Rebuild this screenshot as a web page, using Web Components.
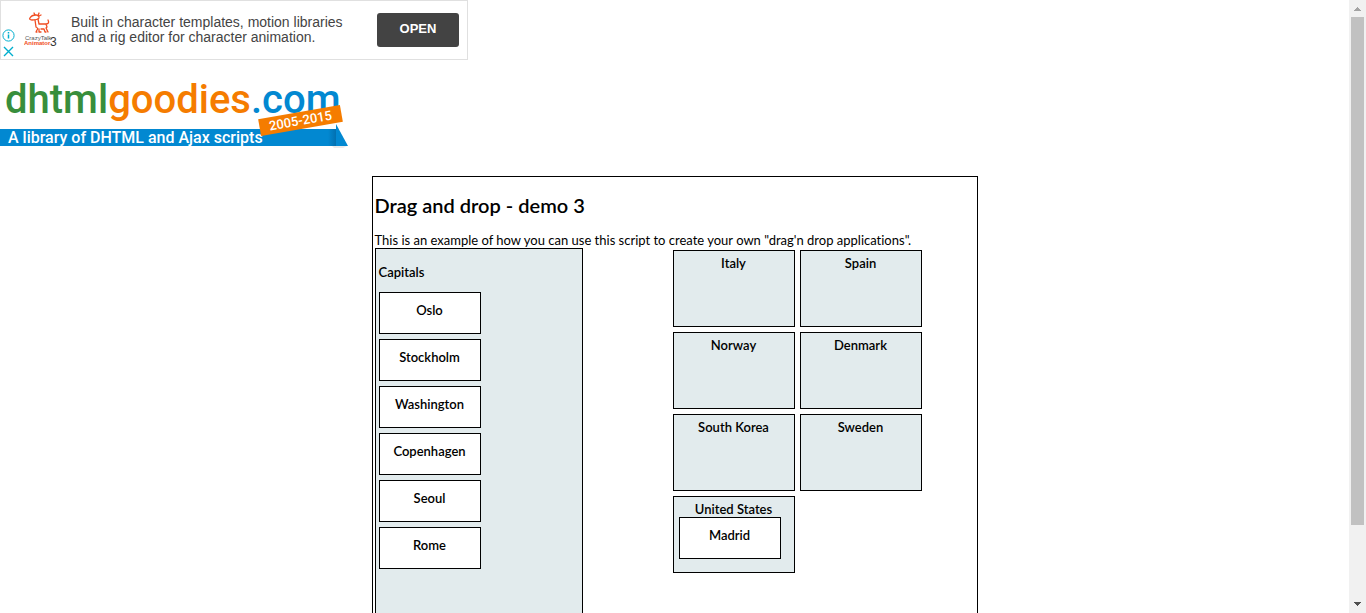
<!DOCTYPE html>
<html lang="en">
<head>
<meta charset="utf-8">
<title>Drag and drop - demo 3</title>
<style>
  body { margin: 0; background: #fff; color: #000; font-family: "Trebuchet MS", Lato, sans-serif; font-size: 13px; line-height: 16px; font-variant-ligatures: none; }
</style>
</head>
<body>
<page-shell>
  <ad-banner></ad-banner>
  <site-logo></site-logo>
  <demo-panel heading="Drag and drop - demo 3">
    <span slot="intro">This is an example of how you can use this script to create your own "drag'n drop applications".</span>
    <capital-list slot="source" heading="Capitals">
      <drag-card>Oslo</drag-card>
      <drag-card>Stockholm</drag-card>
      <drag-card>Washington</drag-card>
      <drag-card>Copenhagen</drag-card>
      <drag-card>Seoul</drag-card>
      <drag-card>Rome</drag-card>
    </capital-list>
    <country-grid slot="targets">
      <country-box name="Italy"></country-box>
      <country-box name="Spain"></country-box>
      <country-box name="Norway"></country-box>
      <country-box name="Denmark"></country-box>
      <country-box name="South Korea"></country-box>
      <country-box name="Sweden"></country-box>
      <country-box name="United States"><drag-card>Madrid</drag-card></country-box>
    </country-grid>
  </demo-panel>
</page-shell>
<script>
const define = (tag, html, setup) => customElements.define(tag, class extends HTMLElement {
  constructor() {
    super();
    this.attachShadow({ mode: "open" }).innerHTML = html;
  }
  connectedCallback() { if (setup) setup(this, this.shadowRoot); }
});

define("scroll-rail", `
  <style>
    :host { display: flex; flex-direction: column; align-items: center; background: #f1f1f1; }
    svg { display: block; flex: none; }
    .track { flex: 1; width: 13px; }
    .thumb { height: calc(88% - 2px); background: #c1c1c1; }
  </style>
  <svg width="17" height="17" shape-rendering="crispEdges"><path fill="#a3a3a3" d="M8 7h1v1h1v1h1v1h1v1H5v-1h1V9h1V8h1z"/></svg>
  <div class="track"><div class="thumb"></div></div>
  <svg width="17" height="17" shape-rendering="crispEdges"><path fill="#505050" d="M5 6h7v1h-1v1h-1v1H9v1H8V9H7V8H6V7H5z"/></svg>
`);

define("page-shell", `
  <style>
    :host { display: grid; grid-template-columns: minmax(0, 1fr) 17px; height: 100vh; }
    .view { overflow: auto; scrollbar-width: none; }
  </style>
  <div class="view"><slot></slot></div>
  <scroll-rail></scroll-rail>
`);

define("ad-banner", `
  <style>
    :host { display: flex; align-items: center; box-sizing: border-box; width: 468px; max-width: 100%; height: 60px; border: 1px solid #e0e0e0; padding-right: 8px; font-family: "Liberation Sans", Arial, sans-serif; }
    svg { display: block; }
    .marks { align-self: flex-end; display: grid; gap: 3px; padding: 0 0 1px 1px; }
    .brand { width: 34px; margin-left: 9px; }
    p { flex: 1; margin: 0 24px 0 13px; font-size: 14px; line-height: 15px; color: #444; }
    .brand text { font-family: "Liberation Sans", sans-serif; }
    button { width: 82px; height: 34px; padding: 0 0 2px; border: 0; border-radius: 3px; background: #434343; color: #fff; font: 700 13px/16px "Liberation Sans", Arial, sans-serif; }
  </style>
  <div class="marks">
    <svg width="13" height="13" viewBox="0 0 13 13" fill="none" stroke="#00aecd"><circle cx="6.5" cy="6.5" r="5.6"/><path stroke-width="1.5" d="M6.5 5.5v4M6.5 3v1.5"/></svg>
    <svg width="13" height="13" viewBox="0 0 13 13" fill="none" stroke="#00aecd" stroke-width="1.4"><path d="M2 2l9 9M11 2l-9 9"/></svg>
  </div>
  <svg class="brand" width="34" height="38" viewBox="0 0 34 38" aria-label="CrazyTalk Animator 3">
    <g fill="none" stroke="#f04e23" stroke-width="1.3" stroke-linecap="round" stroke-linejoin="round">
      <path d="M6 7c1-2 4-3 6-3 3 0 4 3 2 4-2 1-4 1-6 1-2 0-3-1-2-2zM11 4l-1-2M14 5l1-3M15 5l2-1"/>
      <path d="M11 9l1 7M14 8l1 5h7l1 3-1 1 2 4M12 16c2 1 2 2 1 3l-1 2h1M15 18v3h2M17 18h3l1 3h1M22 13c3 0 3-2 2-4"/>
    </g>
    <text x="1" y="29" font-size="6" fill="#555">CrazyTalk</text>
    <text x="0" y="34" font-size="6" font-weight="700" fill="#f04e23">Animator</text>
    <text x="26" y="35" font-size="12" fill="#333">3</text>
  </svg>
  <p>Built in character templates, motion libraries and a rig editor for character animation.</p>
  <button type="button">OPEN</button>
`);

define("site-logo", `
  <style>
    :host { display: block; position: relative; width: 348px; margin-top: 18px; font-family: Roboto, sans-serif; font-weight: 500; }
    a { display: block; color: #0288d1; text-decoration: none; }
    .name { display: block; height: 51px; padding-left: 5px; font-size: 40px; line-height: 43px; white-space: nowrap; }
    .green { color: #388e3c; }
    .orange { color: #f57c00; }
    .ribbon { display: block; width: 336px; padding-left: 8px; box-sizing: border-box; background: #0288d1; color: #fff; font-size: 16px; line-height: 17px; }
    .fold { position: absolute; right: 0; bottom: -4px; }
    .years { position: absolute; left: 259px; top: 34px; width: 83px; background: #f57c00; color: #fff; font-size: 13px; line-height: 17px; text-align: center; transform: rotate(-10deg); }
  </style>
  <a href="#">
    <span class="name"><span class="green">dhtml</span><span class="orange">goodies</span>.com</span>
    <span class="ribbon">A library of DHTML and Ajax scripts</span>
    <svg class="fold" width="20" height="27" viewBox="0 0 20 27">
      <defs><linearGradient id="g"><stop offset="0" stop-color="#0288d1"/><stop offset="1" stop-color="#0270b0"/></linearGradient></defs>
      <path fill="url(#g)" d="M0 6h8v17H0z"/><path fill="#0288d1" d="M8 1l12 22H8z"/><path fill="#000" opacity=".08" d="M4 23h15l-4 2H6z"/>
    </svg>
    <span class="years">2005-2015</span>
  </a>
`);

define("demo-panel", `
  <style>
    :host { display: block; box-sizing: border-box; width: 606px; max-width: 100%; margin: 30px auto 0; border: 1px solid #000; padding: 0 2px 80px; }
    h2 { margin: 17px 0 16px; font-size: 20px; line-height: 22px; font-weight: 600; }
    p { margin: 0; }
    .work { display: flex; justify-content: space-between; align-items: flex-start; }
  </style>
  <h2></h2>
  <p><slot name="intro"></slot></p>
  <div class="work"><slot name="source"></slot><slot name="targets"></slot></div>
`, (el, root) => { root.querySelector("h2").textContent = el.getAttribute("heading"); });

define("capital-list", `
  <style>
    :host { display: block; box-sizing: border-box; width: 208px; min-height: 420px; border: 1px solid #000; padding: 0 3px; background: #e2ebed; }
    h3 { margin: 15px 0 12px; font-size: 13px; line-height: 16px; font-weight: 600; }
    div { display: grid; gap: 5px; justify-items: start; }
  </style>
  <h3></h3>
  <div><slot></slot></div>
`, (el, root) => { root.querySelector("h3").textContent = el.getAttribute("heading"); });

define("drag-card", `
  <style>
    :host { display: block; box-sizing: border-box; width: 102px; height: 42px; border: 1px solid #000; padding-top: 9px; background: #fff; text-align: center; font-weight: 600; cursor: pointer; }
  </style>
  <slot></slot>
`);

define("country-grid", `
  <style>
    :host { display: grid; grid-template-columns: 122px 122px; gap: 5px; align-content: start; box-sizing: border-box; width: 302px; padding-top: 2px; }
  </style>
  <slot></slot>
`);

define("country-box", `
  <style>
    :host { display: block; box-sizing: border-box; height: 77px; border: 1px solid #000; padding: 4px 5px 0; background: #e2ebed; font-weight: 600; }
    div { text-align: center; }
  </style>
  <div></div>
  <slot></slot>
`, (el, root) => { root.querySelector("div").textContent = el.getAttribute("name"); });
</script>
</body>
</html>
